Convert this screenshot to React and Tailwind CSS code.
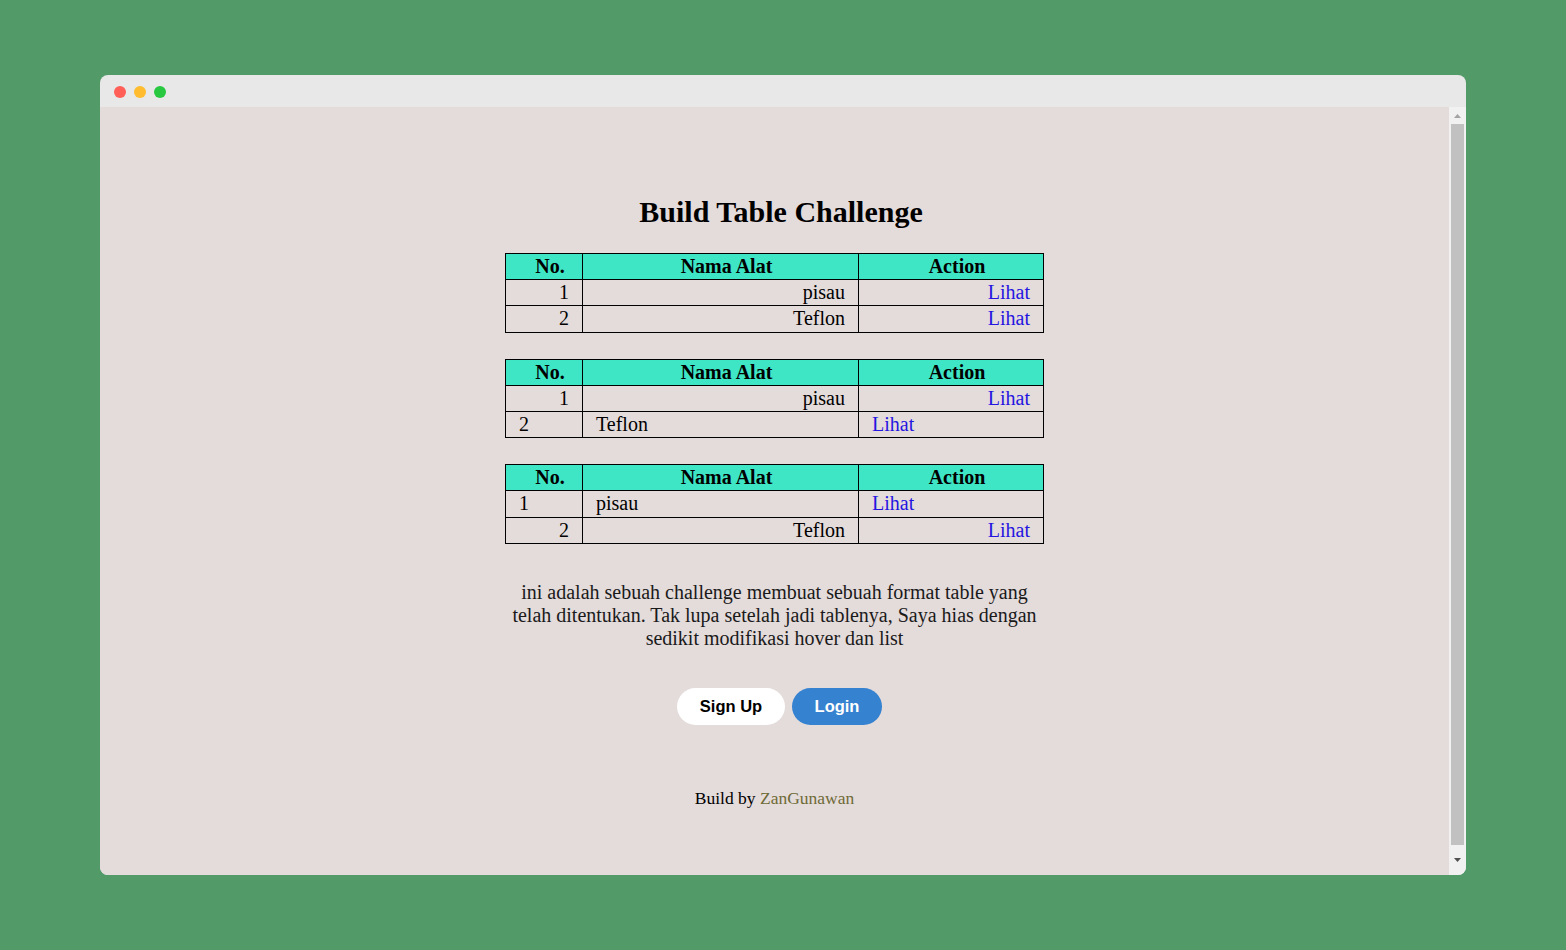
const rows = [
    [
        { no: '1', name: 'pisau', align: 'right' },
        { no: '2', name: 'Teflon', align: 'right' },
    ],
    [
        { no: '1', name: 'pisau', align: 'right' },
        { no: '2', name: 'Teflon', align: 'left' },
    ],
    [
        { no: '1', name: 'pisau', align: 'left' },
        { no: '2', name: 'Teflon', align: 'right' },
    ],
]

const ToolTable = ({ items }) => {
    return (
        <table className="border-collapse w-[539px] text-[20px] leading-[25.2px] text-black">
            <thead>
                <tr className="bg-[#3ee6c6]">
                    <th className="border border-black w-[77px] pl-[12px] font-bold">No.</th>
                    <th className="border border-black w-[276px] pl-[12px] font-bold">Nama Alat</th>
                    <th className="border border-black pl-[12px] font-bold">Action</th>
                </tr>
            </thead>
            <tbody>
                {items.map((item) => {
                    const align = item.align === 'right' ? 'text-right' : 'text-left'
                    return (
                        <tr key={item.no}>
                            <td className={`border border-black px-[13px] ${align}`}>{item.no}</td>
                            <td className={`border border-black px-[13px] ${align}`}>{item.name}</td>
                            <td className={`border border-black px-[13px] ${align}`}>
                                <a href="#" className="text-[#2416e0]">Lihat</a>
                            </td>
                        </tr>
                    )
                })}
            </tbody>
        </table>
    )
}

const App = () => {
    return (
        <div className="min-h-[950px] bg-[#529a68] pt-[75px] pl-[100px]">
            <div className="w-[1366px] h-[800px] rounded-lg overflow-hidden flex flex-col bg-[#e8e8e8]">
                <div className="h-[32px] shrink-0 flex items-center gap-2 pl-[14px] pt-[2px]">
                    <span className="w-3 h-3 rounded-full bg-[#ff5f57]"></span>
                    <span className="w-3 h-3 rounded-full bg-[#febc2e]"></span>
                    <span className="w-3 h-3 rounded-full bg-[#28c840]"></span>
                </div>
                <div className="flex flex-1 min-h-0">
                    <div className="flex-1 bg-[#e4dbdb] flex flex-col items-center font-['Liberation_Serif',serif] text-black">
                        <h1 className="mt-[88px] pl-[13px] text-[30px] leading-[34px] font-bold">Build Table Challenge</h1>
                        <div className="mt-[24px] flex flex-col gap-[26px]">
                            {rows.map((items, i) => (
                                <ToolTable key={i} items={items} />
                            ))}
                        </div>
                        <p className="mt-[37.5px] w-[530px] text-center text-[20px] leading-[23px] text-[#1a1a1a]">
                            ini adalah sebuah challenge membuat sebuah format table yang telah ditentukan. Tak lupa setelah jadi tablenya, Saya hias dengan sedikit modifikasi hover dan list
                        </p>
                        <div className="mt-[38px] pl-[10px] flex gap-[7px] font-['Liberation_Sans',sans-serif] font-bold text-[16.5px]">
                            <button className="w-[108px] h-[37px] rounded-full bg-white text-black">Sign Up</button>
                            <button className="w-[90px] h-[37px] rounded-full bg-[#3582d0] text-white">Login</button>
                        </div>
                        <p className="mt-[62px] text-[17.5px] leading-[22px]">
                            Build by <a href="#" className="text-[#6e6a36]">ZanGunawan</a>
                        </p>
                    </div>
                    <div className="w-[17px] shrink-0 bg-[#f1f1f1] flex flex-col items-center">
                        <div className="h-[17px] flex items-center justify-center">
                            <svg width="7" height="4" viewBox="0 0 7 4"><path d="M0 4 L3.5 0 L7 4 Z" fill="#a3a3a3" /></svg>
                        </div>
                        <div className="w-[13px] flex-1 bg-[#c1c1c1]"></div>
                        <div className="h-[30px] flex items-center justify-center">
                            <svg width="7" height="4" viewBox="0 0 7 4"><path d="M0 0 L3.5 4 L7 0 Z" fill="#505050" /></svg>
                        </div>
                    </div>
                </div>
            </div>
        </div>
    )
}

export default App
